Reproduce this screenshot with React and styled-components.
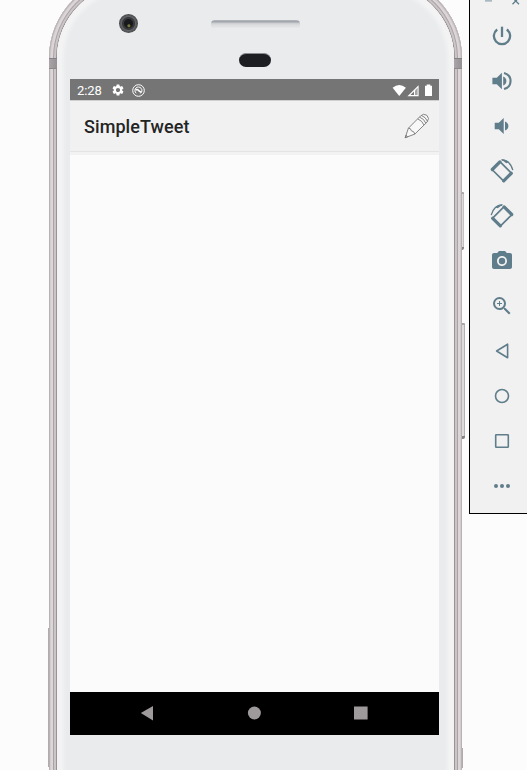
import React from "react";
import styled, { createGlobalStyle } from "styled-components";
import { MdPhotoCamera, MdZoomIn, MdSettings } from "react-icons/md";

const GlobalStyle = createGlobalStyle`
  * { box-sizing: border-box; }
  body { margin: 0; background: #fcfcfc; font-family: Roboto, sans-serif; }
  svg { display: block; flex: none; }
`;

const Page = styled.main`
  display: flex;
  align-items: flex-start;
  gap: 7px;
  width: 527px;
  height: 770px;
  padding-left: 49px;
  overflow: hidden;
`;

const Phone = styled.section`
  position: relative;
  flex: none;
  width: 413px;
  height: 900px;
  margin-top: -24px;
  padding: 24px 8px 0;
  border-radius: 82px;
  background: #f3f3f4;
  box-shadow:
    inset 0 0 0 1px #b9b2b4,
    inset 0 0 0 2px #d3ccce,
    inset 0 0 0 4px #dcd6d8,
    inset 0 0 0 5px #aaa3a6,
    inset 0 0 0 7px #cbc5c7,
    inset 0 0 0 8px #999396;
`;

const Face = styled.div`
  height: 860px;
  margin-top: -16px;
  padding: 16px 13px 0;
  border-radius: 74px;
  background: #e9ebec;
  box-shadow:
    inset 0 0 0 5px #f3f3f4,
    inset 0 0 0 7px #eff0f1,
    inset 0 0 0 9px #ebedee;
`;

const SideKey = styled.span`
  position: absolute;
  top: ${(p) => p.$top + 24}px;
  ${(p) => p.$side}: -${(p) => p.$depth}px;
  width: ${(p) => p.$depth}px;
  height: ${(p) => p.$length}px;
  background: linear-gradient(to right, #c9c4c6, #979194);
`;

const RightKey = styled(SideKey)`
  background: linear-gradient(to right, #dedadb 0 60%, #979194);
  border-top: 2px solid #aaa5a7;
  border-bottom: 3px solid #858083;
  border-radius: 0 1px 2px 0;
`;

const Seam = styled.span`
  position: absolute;
  top: 82px;
  ${(p) => p.$side}: 0;
  width: 8px;
  height: 11px;
  background: linear-gradient(to right, #aaa5a8, #959094);
  border-bottom: 1px solid #8d888c;
  border-top: 1px solid #858084;
`;

const Forehead = styled.header`
  position: relative;
  height: 79px;
`;

const Camera = styled.span`
  position: absolute;
  left: 49px;
  top: 14px;
  width: 19px;
  height: 19px;
  border-radius: 50%;
  background:
    radial-gradient(circle at 52% 62%, #77773c 0 1px, transparent 2px),
    radial-gradient(circle, #17191b 0 4px, #36383c 5px 6px, #626468 7px, #4b4d50 9px);
`;

const Speaker = styled.span`
  position: absolute;
  left: 141px;
  top: 20px;
  width: 89px;
  height: 9px;
  border-radius: 4px;
  background: linear-gradient(#b0b3b9 0 1px, #a2a6ad 1px 2px, #c9cbce 3px, #dcdddf 5px, #e2e3e4 7px, #eeeeef);
`;

const Sensor = styled.span`
  position: absolute;
  left: 169px;
  top: 53px;
  width: 32px;
  height: 14px;
  border-radius: 7px;
  background: #1c1e21;
  border-top: 1px solid #888b8f;
`;

const Screen = styled.div`
  display: flex;
  flex-direction: column;
  width: 369px;
  height: 656px;
  background: #fbfbfb;
`;

const StatusBar = styled.div`
  display: flex;
  align-items: center;
  height: 21px;
  padding: 1px 6px 0 7px;
  background: #757575;
  color: #fff;
  font-size: 13px;
`;

const Clock = styled.span`
  width: 34px;
  letter-spacing: -0.05px;
`;

const Notices = styled.div`
  display: flex;
  align-items: center;
  gap: 7px;
  flex: 1;
`;

const AppBar = styled.div`
  display: flex;
  align-items: center;
  justify-content: space-between;
  height: 52px;
  padding: 0 9px 0 14px;
  background: #f1f1f1;
  border-bottom: 1px solid #e4e4e4;
  border-top: 1px solid #d0d0d0;
`;

const BarShade = styled.div`
  height: 3px;
  background: #f2f2f2;
`;

const Title = styled.h1`
  margin: 2px 0 0;
  font-size: 18px;
  font-weight: 500;
  line-height: 24px;
  letter-spacing: 0.08px;
  color: #242424;
`;

const Content = styled.div`
  flex: 1;
`;

const NavBar = styled.nav`
  display: flex;
  align-items: center;
  justify-content: space-between;
  height: 43px;
  padding: 0 71px 1px 70px;
  background: #000;
`;

const Toolbar = styled.aside`
  flex: none;
  width: 58px;
  height: 514px;
  background: #f1f1f1;
  border-left: 1px solid #000;
  border-bottom: 1px solid #000;
  color: #607d8b;
`;

const WindowControls = styled.div`
  height: 13px;
  padding-left: 14px;
`;

const ToolButton = styled.button`
  display: flex;
  align-items: center;
  justify-content: center;
  width: 64px;
  height: 45px;
  padding: 0;
  border: 0;
  background: none;
  color: inherit;
`;

const WhatsUp = () => (
  <svg width="13" height="13" viewBox="0 0 13 13" fill="none" stroke="#fff">
    <circle cx="6.5" cy="6.5" r="5.8" strokeWidth="1" />
    <path d="M4.2 9.2A3.5 3.5 0 1 1 8.4 9.4" strokeWidth="1" />
    <path d="M3.6 6.2Q5.2 4.6 6.4 6.4L9.2 8.4" strokeWidth="1.5" />
  </svg>
);

const SignalIcons = () => (
  <svg width="41" height="13" viewBox="0 0 41 13">
    <path d="M.6 3.7Q7.2-1.5 13.9 3.7L7.25 12Z" fill="#fff" />
    <path d="M15.4 12.2L26.6 1.2V12.2Z" fill="#fff" />
    <path d="M18.4 11L22 7.4V11Z" fill="#757575" />
    <path d="M23 6.4L25.6 3.8V11H23Z" fill="#a4a4a4" />
    <path d="M33 1.7h1.7V.5h3.6v1.2H40V12H33Z" fill="#fff" />
  </svg>
);

const Pencil = () => (
  <svg width="26" height="26" viewBox="0 0 26 26" fill="#f8f8f8" stroke="#777" strokeWidth=".9" strokeLinejoin="round">
    <path d="M1.2 24.7L4.4 15.2 16.4 3.1Q19.3-.1 22.9 2.3 26 5.4 23.1 9L10.8 21.1Z" />
    <path d="M4.4 15.2Q6.7 14.9 7.4 17.8 10.3 18.2 10.8 21.1M13.8 5.9Q18.3 7.8 20 12M15.5 4.1Q20.2 5.8 21.8 10.2M17.3 2.4Q21.8 4 23.5 8.4M1.2 24.7l1-2.5 1.4 1.6Z" fill="none" />
  </svg>
);

const Power = () => (
  <svg width="20" height="20" viewBox="0 0 20 20" fill="none" stroke="currentColor" strokeWidth="2.3">
    <path d="M10 .7V11" />
    <path d="M5.2 3.5A8.1 8.1 0 1 0 14.8 3.5" />
  </svg>
);

const VolumeUp = () => (
  <svg width="20" height="20" viewBox="0 0 20 20" fill="currentColor">
    <path d="M.4 6.8H4.8L9.9 1.7V18.3L4.8 13.2H.4Z" />
    <path d="M11.2 5.5Q14.4 7 14.4 10T11.2 14.5Z" />
    <path d="M12 1.9C20.7 4.2 20.7 15.8 12 18.1" fill="none" stroke="currentColor" strokeWidth="2.1" />
  </svg>
);

const VolumeDown = () => (
  <svg width="20" height="20" viewBox="0 0 20 20" fill="currentColor">
    <path d="M2.7 6.8H6.8L11.7 1.9V18.1L6.8 13.2H2.7Z" />
    <path d="M13 5.5Q16.4 7 16.4 10T13 14.5Z" />
  </svg>
);

const Rotate = ({ flipped }) => (
  <svg width="24" height="24" viewBox="0 0 24 24" fill="none" stroke="currentColor">
    <g transform={flipped ? "matrix(-1 0 0 1 24 0)" : undefined}>
      <path d="M2 10.5L9.9 2.6 21.6 14.3 13.7 22.2Z" strokeWidth="1.7" strokeLinejoin="round" />
      <path d="M2.3 10.5L9.9 2.9M13.7 21.9L21.3 14.3" strokeWidth="3.2" strokeLinecap="round" />
      <path d="M11.7 1Q20.3 1.3 22.8 11.2" strokeWidth="1.3" />
      <path d="M11.2 .4Q15.5 .1 18.8 3.2L16.2 4.3Q14.3 2.2 11.2 .4Z" fill="currentColor" stroke="none" />
    </g>
  </svg>
);

const Outline = ({ children }) => (
  <svg width="18" height="18" viewBox="0 0 18 18" fill="none" stroke="currentColor" strokeWidth="1.6" strokeLinejoin="round">
    {children}
  </svg>
);

const tools = [
  ["Power", <Power />],
  ["Volume up", <VolumeUp />],
  ["Volume down", <VolumeDown />],
  ["Rotate left", <Rotate />],
  ["Rotate right", <Rotate flipped />],
  ["Take screenshot", <MdPhotoCamera size={24} />],
  ["Zoom", <MdZoomIn size={24} />],
  ["Back", <Outline><path d="M14.6 2.2V15.8L3.6 9Z" /></Outline>],
  ["Home", <Outline><circle cx="9" cy="9" r="6.5" /></Outline>],
  ["Overview", <Outline><rect x="2.7" y="2.7" width="12.6" height="12.6" rx=".6" /></Outline>],
  ["More", (
    <svg width="18" height="18" viewBox="0 0 18 18" fill="currentColor">
      <circle cx="3" cy="9" r="2" /><circle cx="9" cy="9" r="2" /><circle cx="15" cy="9" r="2" />
    </svg>
  )],
];

export default function App() {
  return (
    <>
      <GlobalStyle />
      <Page>
        <Phone>
          <Face>
            <Forehead>
              <Camera />
              <Speaker />
              <Sensor />
            </Forehead>
            <Screen>
              <StatusBar>
                <Clock>2:28</Clock>
                <Notices>
                  <MdSettings size={14} />
                  <WhatsUp />
                </Notices>
                <SignalIcons />
              </StatusBar>
              <AppBar>
                <Title>SimpleTweet</Title>
                <Pencil />
              </AppBar>
              <BarShade />
              <Content />
              <NavBar>
                <svg width="14" height="16" viewBox="0 0 14 16"><path d="M.8 8L13 1v14.6Z" fill="#9e9a9b" /></svg>
                <svg width="14" height="14" viewBox="0 0 14 14"><circle cx="7.4" cy="7" r="6.5" fill="#9e9a9b" /></svg>
                <svg width="14" height="14" viewBox="0 0 14 14"><path d="M0 .5h13.6v13H0Z" fill="#9e9a9b" /></svg>
              </NavBar>
            </Screen>
          </Face>
          <Seam $side="left" />
          <Seam $side="right" />
          <SideKey $side="left" $top={628} $length={139} $depth={1} />
          <RightKey $side="right" $top={192} $length={58} $depth={2} />
          <RightKey $side="right" $top={323} $length={116} $depth={3} />
          <SideKey $side="right" $top={748} $length={20} $depth={1} />
        </Phone>
        <Toolbar>
          <WindowControls>
            <svg width="38" height="6" viewBox="0 0 38 6">
              <path d="M1 0H8V1.7H1Z" fill="#a9b9c1" />
              <path d="M28.5 4.2L35 -2.3M35 4.2L28.5 -2.3" stroke="#607d8b" strokeWidth="1.3" />
            </svg>
          </WindowControls>
          {tools.map(([name, icon]) => (
            <ToolButton key={name} aria-label={name}>{icon}</ToolButton>
          ))}
        </Toolbar>
      </Page>
    </>
  );
}
